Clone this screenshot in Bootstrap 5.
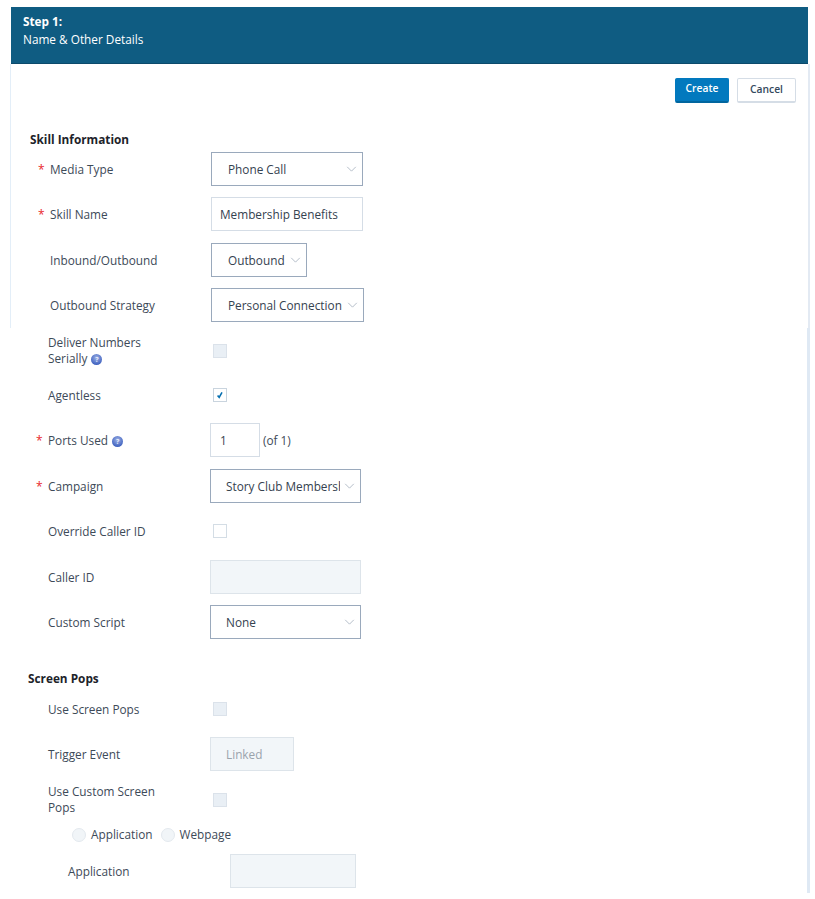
<!DOCTYPE html>
<html lang="en">
<head>
<meta charset="utf-8">
<title>Step 1: Name &amp; Other Details</title>
<link href="https://cdn.jsdelivr.net/npm/bootstrap@5.3.0/dist/css/bootstrap.min.css" rel="stylesheet">
<style>
html,body{height:100%;}
body{font-family:"Open Sans","Liberation Sans",sans-serif;font-size:11.8px;line-height:16px;color:#3d4a58;background:#fff;overflow:hidden;}
.shell{padding-top:7px;width:815px;}
.step-head{margin-left:11px;width:797px;height:57px;background:#0f5c82;border-bottom:1px solid #0c4a6b;color:#fff;padding:6px 12px;font-size:11.8px;line-height:17.5px;}
.upper-pane{margin-left:10px;width:800px;height:264px;border-left:1px solid #e3eef8;border-right:2px solid #e3eaf3;padding:14px 12px 0 19px;}
.lower-pane{width:810px;height:565px;border-right:3px solid #dfe9f4;padding:6px 0 0 28px;}
.btn-create,.btn-cancel{font-size:10.3px;font-weight:600;line-height:14px;padding:0;height:25px;border-radius:2px;}
.btn-create{width:54px;background:#0279be;border:1px solid #0279be;border-bottom:2px solid #01669f;color:#fff;padding-bottom:4px;}
.btn-cancel{width:59px;background:#fff;border:1px solid #d5dde6;border-bottom:2px solid #d5dde6;color:#34495e;padding-bottom:2px;}
.group-title{font-size:11.8px;font-weight:700;color:#1d232a;line-height:16px;}
.title-skill{margin-top:28px;margin-bottom:5px;}
.title-pops{margin-top:31px;margin-bottom:6px;}
.fld{min-height:34px;margin-bottom:11.4px;}
.fld-tight{margin-bottom:10px;}
.fld-label{position:relative;flex:0 0 auto;font-size:11.8px;line-height:16px;color:#3d4a58;}
.upper-pane .fld-label{width:181px;padding-left:20px;}
.lower-pane .fld-label{width:182px;padding-left:20px;padding-right:50px;}
.lower-pane .fld-label.two-line{padding-bottom:2px;}
.req{color:#e8262a;position:absolute;left:8px;top:1px;font-size:12px;}
.form-select.sel-box,.form-control.txt-box{height:34px;min-height:34px;border-radius:0;font-size:11.8px;line-height:16px;color:#35424f;box-shadow:none;flex:0 0 auto;}
.form-select.sel-box{border:1px solid #9aa9bc;padding:0 20px 0 15px;background-image:url("data:image/svg+xml,%3csvg xmlns='http://www.w3.org/2000/svg' viewBox='0 0 12 7'%3e%3cpath fill='none' stroke='%23a8b3c0' d='M1 1l5 5 5-5'/%3e%3c/svg%3e");background-size:11px 6px;background-position:right 5px center;background-repeat:no-repeat;}
.upper-pane .form-select.sel-box{padding-left:16px;}
.form-control.txt-box{border:1px solid #d5dde6;padding:0 8px;}
.form-control.txt-box:disabled{background:#f2f6f9;border-color:#dde4ea;color:#9aa3ac;}
.wd-152{width:152px;}.wd-151{width:151px;}.wd-96{width:96px;}.wd-153{width:153px;}.wd-50{width:50px;}.wd-84{width:84px;}.wd-126{width:126px;}
.pad-9{padding-left:9px!important;}
.pad-15{padding-left:15px!important;}
.form-check-input.tick{width:14px;height:14px;margin:0 0 0 3px;border-radius:0;border:1px solid #d4dde5;background-color:#fff;box-shadow:none;opacity:1;}
.form-check-input.tick:disabled{background-color:#e9eff5;border-color:#dbe2ea;opacity:1;}
.form-check-input.tick:checked{background-color:#fff;border-color:#c9d4de;background-image:url("data:image/svg+xml,%3csvg xmlns='http://www.w3.org/2000/svg' viewBox='0 0 14 14'%3e%3cpath fill='none' stroke='%23056fb0' stroke-width='1.6' d='M4.6 7.4l1.6 2 2.8-5'/%3e%3c/svg%3e");background-size:14px 14px;}
.help-dot{display:inline-block;width:11px;height:11px;border-radius:50%;background:radial-gradient(circle at 50% 35%,#9db0e4,#3f62c0 75%);color:#e6ecfb;font-size:7px;line-height:11px;font-weight:700;text-align:center;vertical-align:1.5px;margin-left:1px;}
.help-dot::after{content:"?";}
.note{margin-left:3px;color:#3d4a58;}
.radio-line{margin-left:44px;height:18px;margin-top:-2px;margin-bottom:10px;gap:5px;color:#3d4a58;}
.form-check-input.roundel{width:14px;height:14px;margin:0;border:1px solid #e3e9ee;background-color:#f1f5f8;opacity:1;}
.radio-line label{margin-right:3px;opacity:1;padding-bottom:2px;}
.lower-pane .app-line .fld-label{width:202px;padding-left:40px;padding-right:0;}
</style>
</head>
<body>
<div class="shell">
  <div class="step-head"><div class="fw-bold">Step 1:</div><div>Name &amp; Other Details</div></div>
  <div class="upper-pane">
    <div class="d-flex justify-content-end gap-2">
      <button type="button" class="btn btn-create">Create</button>
      <button type="button" class="btn btn-cancel">Cancel</button>
    </div>
    <div class="group-title title-skill">Skill Information</div>
    <div class="fld d-flex align-items-center">
      <div class="fld-label"><span class="req">*</span>Media Type</div>
      <select class="form-select sel-box wd-152"><option>Phone Call</option></select>
    </div>
    <div class="fld d-flex align-items-center">
      <div class="fld-label"><span class="req">*</span>Skill Name</div>
      <input class="form-control txt-box wd-152" value="Membership Benefits">
    </div>
    <div class="fld d-flex align-items-center">
      <div class="fld-label">Inbound/Outbound</div>
      <select class="form-select sel-box wd-96"><option>Outbound</option></select>
    </div>
    <div class="fld d-flex align-items-center">
      <div class="fld-label">Outbound Strategy</div>
      <select class="form-select sel-box wd-153"><option>Personal Connection</option></select>
    </div>
  </div>
  <div class="lower-pane">
    <div class="fld fld-tight d-flex align-items-center">
      <div class="fld-label two-line">Deliver Numbers Serially <span class="help-dot"></span></div>
      <input class="form-check-input tick" type="checkbox" disabled>
    </div>
    <div class="fld d-flex align-items-center">
      <div class="fld-label">Agentless</div>
      <input class="form-check-input tick" type="checkbox" checked>
    </div>
    <div class="fld d-flex align-items-center">
      <div class="fld-label"><span class="req">*</span>Ports Used <span class="help-dot"></span></div>
      <input class="form-control txt-box wd-50 pad-9" value="1"><span class="note">(of 1)</span>
    </div>
    <div class="fld d-flex align-items-center">
      <div class="fld-label"><span class="req">*</span>Campaign</div>
      <select class="form-select sel-box wd-151"><option>Story Club Membership Renewal</option></select>
    </div>
    <div class="fld d-flex align-items-center">
      <div class="fld-label">Override Caller ID</div>
      <input class="form-check-input tick" type="checkbox">
    </div>
    <div class="fld d-flex align-items-center">
      <div class="fld-label">Caller ID</div>
      <input class="form-control txt-box wd-151" disabled>
    </div>
    <div class="fld d-flex align-items-center">
      <div class="fld-label">Custom Script</div>
      <select class="form-select sel-box wd-151"><option>None</option></select>
    </div>
    <div class="group-title title-pops">Screen Pops</div>
    <div class="fld d-flex align-items-center">
      <div class="fld-label">Use Screen Pops</div>
      <input class="form-check-input tick" type="checkbox" disabled>
    </div>
    <div class="fld d-flex align-items-center">
      <div class="fld-label">Trigger Event</div>
      <input class="form-control txt-box wd-84 pad-15" value="Linked" disabled>
    </div>
    <div class="fld d-flex align-items-center">
      <div class="fld-label two-line">Use Custom Screen Pops</div>
      <input class="form-check-input tick" type="checkbox" disabled>
    </div>
    <div class="radio-line d-flex align-items-center">
      <input class="form-check-input roundel" type="radio" name="pop" id="rApp" disabled><label for="rApp">Application</label>
      <input class="form-check-input roundel" type="radio" name="pop" id="rWeb" disabled><label for="rWeb">Webpage</label>
    </div>
    <div class="fld app-line d-flex align-items-center">
      <div class="fld-label">Application</div>
      <input class="form-control txt-box wd-126" disabled>
    </div>
  </div>
</div>
<script src="https://cdn.jsdelivr.net/npm/bootstrap@5.3.0/dist/js/bootstrap.bundle.min.js"></script>
</body>
</html>
